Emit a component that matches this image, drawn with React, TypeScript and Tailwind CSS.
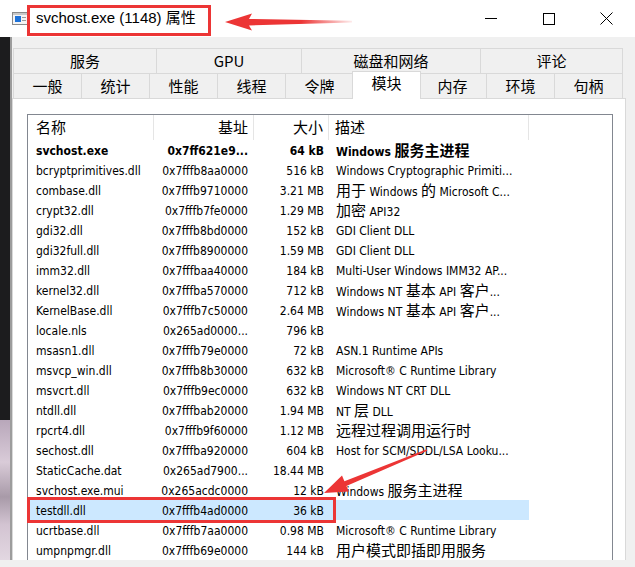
import React from 'react';

type Row = [string, string, string, string];

const rows: Row[] = [
  ['svchost.exe', '0x7ff621e9...', '64 kB', 'Windows 服务主进程'],
  ['bcryptprimitives.dll', '0x7fffb8aa0000', '516 kB', 'Windows Cryptographic Primiti...'],
  ['combase.dll', '0x7fffb9710000', '3.21 MB', '用于 Windows 的 Microsoft C...'],
  ['crypt32.dll', '0x7fffb7fe0000', '1.29 MB', '加密 API32'],
  ['gdi32.dll', '0x7fffb8bd0000', '152 kB', 'GDI Client DLL'],
  ['gdi32full.dll', '0x7fffb8900000', '1.59 MB', 'GDI Client DLL'],
  ['imm32.dll', '0x7fffbaa40000', '184 kB', 'Multi-User Windows IMM32 AP...'],
  ['kernel32.dll', '0x7fffba570000', '712 kB', 'Windows NT 基本 API 客户...'],
  ['KernelBase.dll', '0x7fffb7c50000', '2.64 MB', 'Windows NT 基本 API 客户...'],
  ['locale.nls', '0x265ad0000...', '796 kB', ''],
  ['msasn1.dll', '0x7fffb79e0000', '72 kB', 'ASN.1 Runtime APIs'],
  ['msvcp_win.dll', '0x7fffb8b30000', '632 kB', 'Microsoft® C Runtime Library'],
  ['msvcrt.dll', '0x7fffb9ec0000', '632 kB', 'Windows NT CRT DLL'],
  ['ntdll.dll', '0x7fffbab20000', '1.94 MB', 'NT 层 DLL'],
  ['rpcrt4.dll', '0x7fffb9f60000', '1.12 MB', '远程过程调用运行时'],
  ['sechost.dll', '0x7fffba920000', '604 kB', 'Host for SCM/SDDL/LSA Looku...'],
  ['StaticCache.dat', '0x265ad7900...', '18.44 MB', ''],
  ['svchost.exe.mui', '0x265acdc0000', '12 kB', 'Windows 服务主进程'],
  ['testdll.dll', '0x7fffb4ad0000', '36 kB', ''],
  ['ucrtbase.dll', '0x7fffb7aa0000', '0.98 MB', 'Microsoft® C Runtime Library'],
  ['umpnpmgr.dll', '0x7fffb69e0000', '144 kB', '用户模式即插即用服务'],
];

const topTabs = [
  { label: '服务', w: 'w-[144px]' },
  { label: 'GPU', w: 'w-[145px]' },
  { label: '磁盘和网络', w: 'w-[179px]' },
  { label: '评论', w: 'w-[142px]' },
];
const bottomTabs = ['一般', '统计', '性能', '线程', '令牌', '模块', '内存', '环境', '句柄'];

// wrap CJK runs so they come out at the wider size the dialog uses
const T: React.FC<{ s: string }> = ({ s }) => {
  const parts = s.split(/([\u3000-\u9fff\uff00-\uffef]+)/);
  return (
    <>
      {parts.map((p, i) =>
        i % 2 === 1 ? (
          <span key={i} className="text-[15px]">{p}</span>
        ) : (
          <React.Fragment key={i}>{p}</React.Fragment>
        )
      )}
    </>
  );
};

const App: React.FC = () => {
  return (
    <div className="relative w-[635px] h-[567px] overflow-hidden bg-[#f0f0f0] flex flex-col font-['DejaVu_Sans_Condensed','Noto_Sans_CJK_SC',sans-serif] text-[12px] text-black">
      {/* title bar */}
      <div className="h-[37px] bg-white flex items-center shrink-0">
        <svg className="ml-[12px]" width="16" height="13" viewBox="0 0 16 13">
          <rect x="0.5" y="0.5" width="15" height="12" fill="#f4f4f4" stroke="#8a8a8a" />
          <rect x="1" y="1" width="14" height="2" fill="#c8c8c8" />
          <rect x="3" y="4" width="6" height="6" fill="#1e72d8" />
          <rect x="10" y="5" width="4" height="1" fill="#9a9a9a" />
          <rect x="10" y="8" width="4" height="1" fill="#9a9a9a" />
        </svg>
        <span className="ml-[8px] text-[15px] font-['Liberation_Sans','Noto_Sans_CJK_SC',sans-serif]">
          svchost.exe (1148) 属性
        </span>
        <div className="ml-auto flex h-full">
          <div className="w-[58px] flex items-center justify-center">
            <div className="w-[12px] h-[1px] bg-black" />
          </div>
          <div className="w-[58px] flex items-center justify-center">
            <div className="w-[12px] h-[12px] border border-black" />
          </div>
          <div className="w-[57px] flex items-center justify-center pr-[1px]">
            <svg width="13" height="13" viewBox="0 0 13 13">
              <path d="M0.5 0.5 L12.5 12.5 M12.5 0.5 L0.5 12.5" stroke="#000" strokeWidth="1" />
            </svg>
          </div>
        </div>
      </div>

      <div className="flex h-[523px] shrink-0">
        {/* desktop behind */}
        <div className="w-[12px] flex">
          <div className="w-[10px] flex flex-col">
            <div className="h-[383px] bg-[#1c1c1e]" />
            <div className="flex-1 bg-[linear-gradient(180deg,#b8a7ba_0%,#d9cbd8_30%,#a89aa8_55%,#d3c4d2_75%,#e2d7e1_100%)]" />
          </div>
          <div className="w-[2px] bg-[#9c9c9c]" />
        </div>

        {/* dialog body */}
        <div className="w-[614px] flex flex-col pt-[11px]">
          <div className="ml-[1px] w-[610px] font-['Noto_Sans_CJK_SC',sans-serif] text-[15px]">
            <div className="flex h-[25px]">
              {topTabs.map((t, i) => (
                <div
                  key={t.label}
                  className={`${t.w} flex items-center justify-center border-t border-r border-[#d9d9d9] bg-[#f0f0f0] ${i === 0 ? 'border-l' : ''}`}
                >
                  {t.label}
                </div>
              ))}
            </div>
            <div className="flex h-[25px]">
              {bottomTabs.map((t, i) =>
                t === '模块' ? (
                  <div
                    key={t}
                    className="relative z-10 flex-1 -mx-[2px] -mt-[2px] h-[28px] flex items-center justify-center pb-[4px] bg-white border-l border-t border-r border-[#d9d9d9]"
                  >
                    {t}
                  </div>
                ) : (
                  <div
                    key={t}
                    className={`flex-1 flex items-center justify-center border-t border-r border-[#d9d9d9] bg-[#f0f0f0] ${i === 0 ? 'border-l' : ''}`}
                  >
                    {t}
                  </div>
                )
              )}
            </div>
          </div>

          {/* tab page */}
          <div className="flex-1 bg-white border-l border-t border-r border-[#d9d9d9] pl-[14px] pr-[12px] pt-[15px] flex flex-col">
            <div className="flex-1 border-l border-t border-r border-[#828790] bg-white">
              <div className="flex h-[25px] font-['Noto_Sans_CJK_SC',sans-serif] text-[15px]">
                <div className="w-[126px] pl-[8px] flex items-center border-r border-[#e5e5e5]">名称</div>
                <div className="w-[100px] pr-[5px] flex items-center justify-end border-r border-[#e5e5e5]">基址</div>
                <div className="w-[75px] pr-[5px] flex items-center justify-end border-r border-[#e5e5e5]">大小</div>
                <div className="w-[200px] pl-[6px] flex items-center border-r border-[#e5e5e5]">描述</div>
              </div>
              {rows.map((r, i) => (
                <div
                  key={r[0]}
                  className={`flex w-[501px] h-[20px] pt-[1px] leading-[20px] whitespace-nowrap ${i === 0 ? 'font-bold' : ''} ${r[0] === 'testdll.dll' ? 'bg-[#cce8ff]' : ''}`}
                >
                  <div className="w-[126px] pl-[8px] overflow-hidden">{r[0]}</div>
                  <div className="w-[100px] pr-[6px] text-right overflow-hidden">{r[1]}</div>
                  <div className="w-[75px] pr-[5px] text-right overflow-hidden">{r[2]}</div>
                  <div className="w-[200px] pl-[7px] overflow-hidden">
                    <T s={r[3]} />
                  </div>
                </div>
              ))}
            </div>
          </div>
        </div>
        <div className="flex-1" />
      </div>

      {/* annotations */}
      <div className="absolute left-[27px] top-[5px] w-[184px] h-[31px] border-[3px] border-[#ec3535]" />
      <div className="absolute left-[27px] top-[497px] w-[309px] h-[26px] border-[3px] border-[#ec3535]" />
      <svg className="absolute inset-0 pointer-events-none" width="635" height="567" viewBox="0 0 635 567">
        <defs>
          <linearGradient id="fade" gradientUnits="userSpaceOnUse" x1="225" y1="0" x2="352" y2="0">
            <stop offset="0" stopColor="#ec3535" />
            <stop offset="0.6" stopColor="#ec3535" />
            <stop offset="1" stopColor="#ec3535" stopOpacity="0.1" />
          </linearGradient>
        </defs>
        <polygon points="225,22 252,13.5 249,19 352,20.8 352,22.4 249,25.5 252,30.5" fill="url(#fade)" />
        <polygon
          points="324,493 349,491.5 346.4,485.9 427.3,450.7 426.7,449.3 344.4,481.3 342,475.5"
          fill="#ec3535"
        />
      </svg>
    </div>
  );
};

export default App;
